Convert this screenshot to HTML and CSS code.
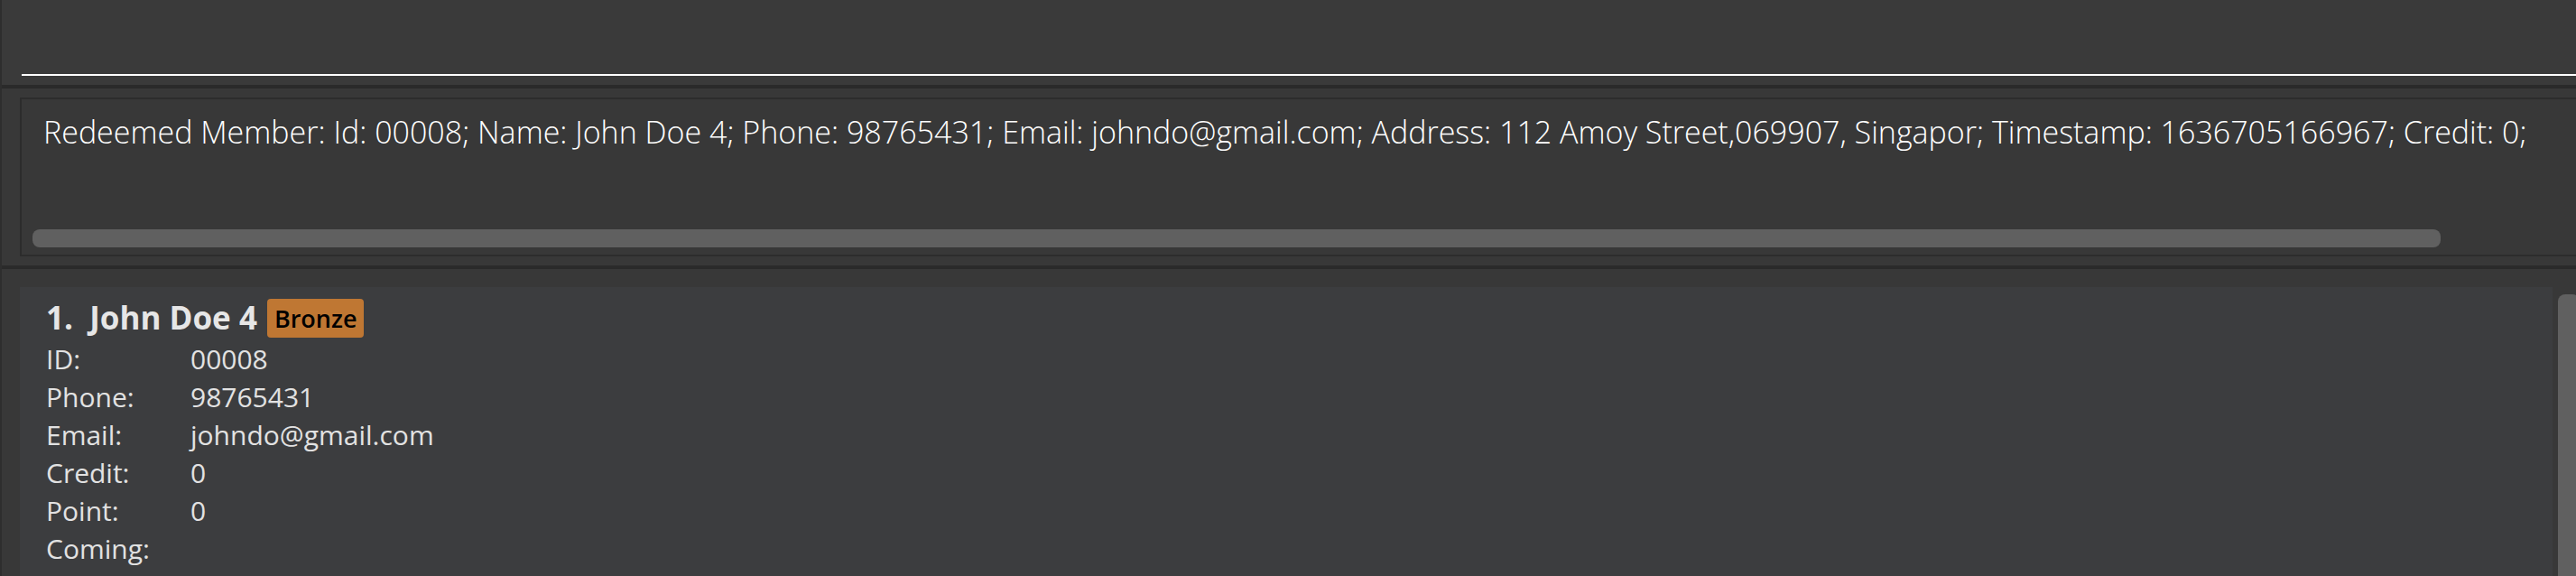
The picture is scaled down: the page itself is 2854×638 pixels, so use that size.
FILE: index.html
```html
<!DOCTYPE html>
<html>
<head>
<meta charset="utf-8">
<link rel="stylesheet" href="styles.css">
</head>
<body>
<div class="app">
  <div class="command-bar"><div class="command-line"></div></div>
  <div class="sep"></div>
  <div class="result-pane">
    <div class="result-box">
      <div class="result-text">Redeemed Member: Id: 00008; Name: John Doe 4; Phone: 98765431; Email: johndo@gmail.com; Address: 112 Amoy Street,069907, Singapor; Timestamp: 1636705166967; Credit: 0;</div>
      <div class="hscroll"><div class="hthumb"></div></div>
    </div>
  </div>
  <div class="sep"></div>
  <div class="list-pane">
    <div class="card">
      <div class="card-title">
        <span class="card-name">1.&nbsp; John Doe 4</span>
        <span class="badge">Bronze</span>
      </div>
      <div class="details">
        <span class="label">ID:</span><span class="value">00008</span>
        <span class="label">Phone:</span><span class="value">98765431</span>
        <span class="label">Email:</span><span class="value">johndo@gmail.com</span>
        <span class="label">Credit:</span><span class="value">0</span>
        <span class="label">Point:</span><span class="value">0</span>
        <span class="label">Coming:</span><span class="value"></span>
      </div>
    </div>
    <div class="vscroll"><div class="vthumb"></div></div>
  </div>
</div>
</body>
</html>
```
FILE: styles.css
```css
html, body {
  margin: 0;
  padding: 0;
  width: 2854px;
  height: 638px;
  overflow: hidden;
  background: #383838;
  font-family: "Open Sans", "Liberation Sans", sans-serif;
}

.app {
  height: 638px;
  border-left: 2px solid #2e2e2e;
  display: flex;
  flex-direction: column;
}

.command-bar {
  flex: none;
  height: 94px;
  box-sizing: border-box;
  background: #3a3a3a;
  padding: 82px 0 0 22px;
}

.command-line {
  height: 2px;
  background: #ffffff;
}

.sep {
  flex: none;
  height: 4px;
  background: #2a2a2a;
}

.result-pane {
  flex: none;
  height: 196px;
  box-sizing: border-box;
  padding: 10px 0 10px 20px;
  background: #383838;
}

.result-box {
  height: 176px;
  box-sizing: border-box;
  border: 2px solid #2c2c2c;
  border-right: none;
  display: flex;
  flex-direction: column;
  justify-content: space-between;
  overflow: hidden;
}

.result-text {
  padding: 14px 0 0 24px;
  font-weight: 300;
  font-size: 34px;
  line-height: 45px;
  color: #ffffff;
  white-space: nowrap;
}

.hscroll {
  padding: 0 0 8px 12px;
}

.hthumb {
  width: 2668px;
  height: 20px;
  border-radius: 8px;
  background: #606060;
}

.list-pane {
  flex: 1;
  display: flex;
  gap: 6px;
  padding: 20px 0 0 20px;
  overflow: hidden;
  background: #383838;
}

.card {
  flex: none;
  width: 2806px;
  box-sizing: border-box;
  background: #3c3d3f;
  padding: 10px 0 0 29px;
}

.card-title {
  display: flex;
  align-items: center;
  height: 48px;
}

.card-name {
  font-size: 35px;
  font-weight: 700;
  line-height: 48px;
  color: #e6e6e6;
  white-space: nowrap;
}

.badge {
  margin-left: 11px;
  height: 43px;
  line-height: 43px;
  padding: 0 8px;
  border-radius: 4px;
  background: #bf7733;
  color: #000000;
  font-size: 27px;
  font-weight: 600;
}

.details {
  margin-top: 1px;
  display: grid;
  grid-template-columns: 160px 1fr;
  font-size: 30px;
  line-height: 42px;
  color: #e2e2e2;
}

.vscroll {
  flex: none;
  padding-top: 8px;
}

.vthumb {
  width: 24px;
  height: 420px;
  border-radius: 8px;
  background: #606060;
}
```
